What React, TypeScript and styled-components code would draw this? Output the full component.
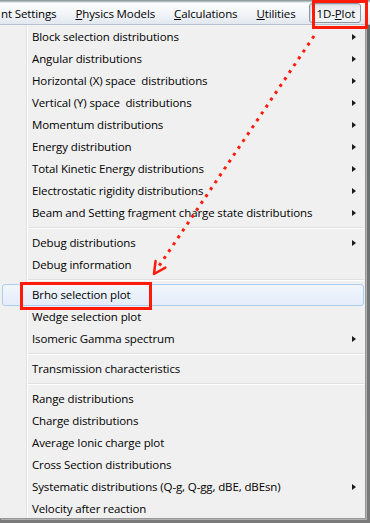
import React from "react";
import styled, { createGlobalStyle } from "styled-components";

const Global = createGlobalStyle`
  html, body { margin: 0; padding: 0; }
  body { background: #6e6e6e; overflow: hidden; }
`;

const Screen = styled.div`
  position: relative;
  width: 370px;
  height: 523px;
  overflow: hidden;
  background: linear-gradient(to bottom, #5f6a6a, #7a7a7a);
  font-family: "Open Sans", "Noto Sans", sans-serif;
  font-size: 11.5px;
  letter-spacing: -0.12px;
  color: #000;
`;

const MenuBar = styled.div`
  height: 24px;
  border-bottom: 1px solid #b9c1cc;
  background: linear-gradient(
    to bottom,
    #7d8b88 0px,
    #c8d1d4 2px,
    #fbfcfd 3px,
    #f4f7fa 12px,
    #e2e8f0 24px
  );
  display: flex;
  align-items: center;
  white-space: nowrap;
`;

const BarItem = styled.div<{ $pressed?: boolean; $first?: boolean }>`
  height: 20px;
  line-height: 19px;
  box-sizing: border-box;
  margin-top: 2px;
  padding: 0 ${(p) => (p.$pressed ? 5 : 8)}px 0 ${(p) => (p.$first ? 0 : p.$pressed ? 7 : 8)}px;
  border: 1px solid ${(p) => (p.$pressed ? "#8e979f" : "transparent")};
  border-radius: 3px;
  background: ${(p) =>
    p.$pressed ? "linear-gradient(to bottom, #e3e8ee, #f3f5f8 60%, #eef1f5)" : "transparent"};
  box-shadow: ${(p) => (p.$pressed ? "inset 1px 1px 1px rgba(0,0,0,0.12)" : "none")};
  margin-left: ${(p) => (p.$first ? 0 : p.$pressed ? 4 : 1)}px;
`;

const Key = styled.span`
  text-decoration: underline;
`;

const Dropdown = styled.div`
  width: 366px;
  height: 494px;
  box-sizing: border-box;
  padding-top: 1px;
  border-right: 1px solid #979797;
  border-bottom: 1px solid #979797;
  background:
    linear-gradient(
      to right,
      transparent 26px,
      #e2e3e3 26px,
      #e2e3e3 27px,
      #ffffff 27px,
      #ffffff 28px,
      transparent 28px
    ),
    #f0f0f0;
  box-shadow: 1px 1px 0 #b0b0b0;
`;

const Item = styled.div<{ $active?: boolean }>`
  height: 22px;
  box-sizing: border-box;
  margin: 0 1px 0 2px;
  padding: 0 7px 0 29px;
  border: 1px solid ${(p) => (p.$active ? "#a9cef2" : "transparent")};
  border-radius: 3px;
  background: ${(p) =>
    p.$active ? "linear-gradient(to bottom, #f2f6fc, #e4edf9)" : "transparent"};
  display: flex;
  align-items: center;
  justify-content: space-between;
  white-space: pre;
  line-height: 20px;
`;

const SubArrow = styled.span`
  width: 0;
  height: 0;
  border-left: 4px solid #1a1a1a;
  border-top: 3.5px solid transparent;
  border-bottom: 3.5px solid transparent;
`;

const Separator = styled.div`
  height: 8px;
  margin: 0 1px 0 28px;
  display: flex;
  flex-direction: column;
  justify-content: center;
  &::before {
    content: "";
    display: block;
    height: 1px;
    background: #e0e0e0;
  }
  &::after {
    content: "";
    display: block;
    height: 1px;
    background: #ffffff;
  }
`;

const Overlay = styled.svg`
  position: absolute;
  left: 0;
  top: 0;
  pointer-events: none;
`;

type Entry = { label: string; sub?: boolean; active?: boolean } | "sep";

const entries: Entry[] = [
  { label: "Block selection distributions", sub: true },
  { label: "Angular distributions", sub: true },
  { label: "Horizontal (X) space  distributions", sub: true },
  { label: "Vertical (Y) space  distributions", sub: true },
  { label: "Momentum distributions", sub: true },
  { label: "Energy distribution", sub: true },
  { label: "Total Kinetic Energy distributions", sub: true },
  { label: "Electrostatic rigidity distributions", sub: true },
  { label: "Beam and Setting fragment charge state distributions", sub: true },
  "sep",
  { label: "Debug distributions", sub: true },
  { label: "Debug information" },
  "sep",
  { label: "Brho selection plot", active: true },
  { label: "Wedge selection plot" },
  { label: "Isomeric Gamma spectrum", sub: true },
  "sep",
  { label: "Transmission characteristics" },
  "sep",
  { label: "Range distributions" },
  { label: "Charge distributions" },
  { label: "Average Ionic charge plot" },
  { label: "Cross Section distributions" },
  { label: "Systematic distributions (Q-g, Q-gg, dBE, dBEsn)", sub: true },
  { label: "Velocity after reaction" },
];

function arrowHead(tx: number, ty: number, fx: number, fy: number, len: number, deg: number) {
  const a = Math.atan2(fy - ty, fx - tx);
  const r = (deg * Math.PI) / 180;
  const p1 = [tx + len * Math.cos(a - r), ty + len * Math.sin(a - r)];
  const p2 = [tx + len * Math.cos(a + r), ty + len * Math.sin(a + r)];
  return `M${p1[0]},${p1[1]} L${tx},${ty} L${p2[0]},${p2[1]}`;
}

export default function App() {
  const tip = { x: 154, y: 274 };
  const start = { x: 314, y: 36 };
  return (
    <Screen>
      <Global />
      <MenuBar>
        <BarItem $first>nt Settings</BarItem>
        <BarItem>
          <Key>P</Key>hysics Models
        </BarItem>
        <BarItem>
          <Key>C</Key>alculations
        </BarItem>
        <BarItem>
          <Key>U</Key>tilities
        </BarItem>
        <BarItem $pressed>
          1D-<Key>P</Key>lot
        </BarItem>
      </MenuBar>
      <Dropdown>
        {entries.map((e, i) =>
          e === "sep" ? (
            <Separator key={i} />
          ) : (
            <Item key={i} $active={e.active}>
              <span>{e.label}</span>
              {e.sub && <SubArrow />}
            </Item>
          )
        )}
      </Dropdown>
      <Overlay width="370" height="523" viewBox="0 0 370 523">
        <rect x="313.5" y="1.5" width="53" height="26" fill="none" stroke="#ff1a0a" strokeWidth="3" />
        <rect x="21.5" y="283.5" width="129" height="25" fill="none" stroke="#ff1a0a" strokeWidth="3" />
        <line
          x1={start.x}
          y1={start.y}
          x2={tip.x + 3}
          y2={tip.y - 5}
          stroke="#ff1a0a"
          strokeWidth="3"
          strokeDasharray="3 5.3"
        />
        <path
          d={arrowHead(tip.x, tip.y, start.x, start.y, 13, 27)}
          fill="none"
          stroke="#ff1a0a"
          strokeWidth="2.5"
          strokeLinecap="round"
          strokeLinejoin="round"
        />
      </Overlay>
    </Screen>
  );
}
